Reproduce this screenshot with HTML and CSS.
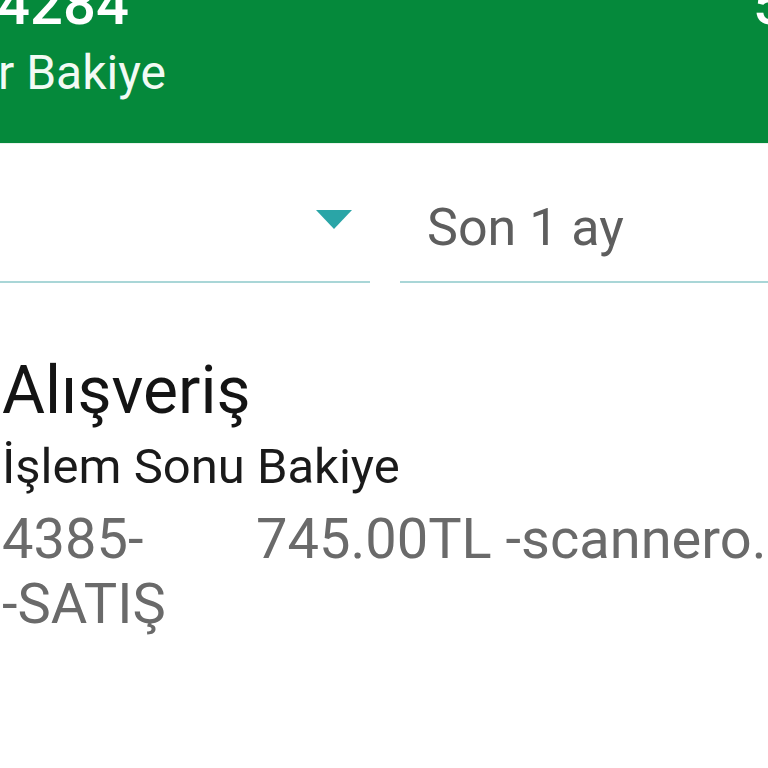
FILE: index.html
```html
<!DOCTYPE html>
<html lang="tr">
<head>
<meta charset="utf-8">
<link rel="stylesheet" href="styles.css">
</head>
<body>
<header class="header">
  <div class="header-top">
    <span class="amount">4284</span>
    <span class="amount amount-right">5</span>
  </div>
  <div class="header-label">r Bakiye</div>
</header>
<section class="filters">
  <div class="select select-left">
    <span class="caret"></span>
  </div>
  <div class="select select-right">
    <span class="select-text">Son 1 ay</span>
  </div>
</section>
<section class="item">
  <div class="item-title">Alışveriş</div>
  <div class="item-sub">İşlem Sonu Bakiye</div>
  <div class="item-row">
    <div class="item-code">4385-<br>-SATIŞ</div>
    <div class="item-desc">745.00TL -scannero.b</div>
  </div>
</section>
</body>
</html>
```
FILE: styles.css
```css
html, body {
  margin: 0;
  padding: 0;
  width: 768px;
  height: 768px;
  overflow: hidden;
  background: #ffffff;
  font-family: Roboto, "Noto Sans", sans-serif;
}

.header {
  background: #05893b;
  height: 144px;
  overflow: hidden;
  color: #ffffff;
  border-bottom: 1px solid #e9f3ec;
  box-sizing: border-box;
}

.header-top {
  display: flex;
  justify-content: space-between;
  margin-top: -25px;
}

.amount {
  font-size: 58px;
  line-height: 58px;
  font-weight: 500;
  margin-left: -3px;
}

.amount-right {
  margin-right: -18px;
}

.header-label {
  font-size: 48px;
  line-height: 56px;
  margin-top: 12px;
  margin-left: -2px;
  color: #f2faf4;
}

.filters {
  display: flex;
  gap: 30px;
}

.select {
  height: 137px;
  border-bottom: 2px solid #a9d6d7;
  box-sizing: content-box;
}

.select-left {
  width: 370px;
  display: flex;
  justify-content: flex-end;
}

.caret {
  width: 0;
  height: 0;
  border-left: 18px solid transparent;
  border-right: 18px solid transparent;
  border-top: 19px solid #2aa5a7;
  margin-top: 66px;
  margin-right: 18px;
}

.select-right {
  flex: 1;
  padding-left: 27px;
}

.select-text {
  display: block;
  font-size: 52px;
  line-height: 60px;
  padding-top: 54px;
  color: #5e5e5e;
}

.item {
  padding-top: 72px;
  padding-left: 2px;
}

.item-title {
  font-size: 66px;
  line-height: 72px;
  color: #141414;
}

.item-sub {
  font-size: 49px;
  line-height: 80px;
  color: #1a1a1a;
}

.item-row {
  display: grid;
  grid-template-columns: 254px 1fr;
  font-size: 56px;
  line-height: 65px;
  color: #6a6a6a;
}

.item-desc {
  white-space: nowrap;
}
```
